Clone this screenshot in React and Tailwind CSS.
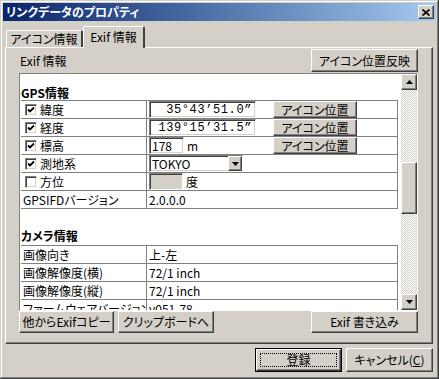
import React from "react";

// classic 3D edges
const raised =
  "bg-[#d4d0c8] border border-t-white border-l-white border-r-[#404040] border-b-[#404040] shadow-[inset_-1px_-1px_#808080]";
const sunken =
  "border border-t-[#808080] border-l-[#808080] border-r-white border-b-white shadow-[inset_1px_1px_#404040,inset_-1px_-1px_#d4d0c8]";

function Check({ checked }) {
  return (
    <span className={`w-[12px] h-[12px] bg-white flex items-center justify-center shrink-0 ${sunken}`}>
      {checked && (
        <svg width="8" height="8" viewBox="0 0 8 8">
          <path d="M1 3.5 L3 5.5 L7 1.5" fill="none" stroke="#000" strokeWidth="1.8" />
        </svg>
      )}
    </span>
  );
}

function Tri({ down }) {
  return (
    <svg width="7" height="4" viewBox="0 0 7 4">
      <polygon points={down ? "0,0 7,0 3.5,4" : "0,4 7,4 3.5,0"} fill="#000" />
    </svg>
  );
}

function PosButton() {
  return (
    <button className={`w-[84px] h-[17px] flex items-center justify-center shrink-0 ${raised}`}>
      アイコン位置
    </button>
  );
}

function Row({ label, check, children }) {
  return (
    <div className="flex h-[18px] border-b border-[#808080]">
      <div className="w-[126px] shrink-0 border-r border-[#808080] flex items-center whitespace-nowrap overflow-hidden">
        {check === undefined ? (
          <span className="pl-[2px]">{label}</span>
        ) : (
          <span className="flex items-center pl-[4px] gap-[3px]">
            <Check checked={check} />
            {label}
          </span>
        )}
      </div>
      <div className="flex-1 flex items-stretch pl-[2px]">{children}</div>
    </div>
  );
}

function CoordRow({ label, value }) {
  return (
    <Row label={label} check={true}>
      <div className="w-[124px] flex items-stretch">
        <div
          className={`w-[107px] bg-white flex items-center justify-end pr-[3px] font-['Liberation_Mono',monospace] tracking-[0.6px] ${sunken}`}
        >
          {value}
        </div>
      </div>
      <PosButton />
    </Row>
  );
}

function CamRow({ label, value }) {
  return (
    <div className="flex h-[18px] border-b border-[#808080] whitespace-nowrap">
      <div className="w-[126px] shrink-0 border-r border-[#808080] flex items-center pl-[2px] overflow-hidden">{label}</div>
      <div className="flex-1 flex items-center pl-[2px]">{value}</div>
    </div>
  );
}

export default function App() {
  return (
    <div className="w-[439px] h-[379px] bg-[#d4d0c8] p-[3px] flex flex-col text-black text-[12px] leading-[14px] font-['Noto_Sans_CJK_JP',sans-serif] [font-feature-settings:'palt'] shadow-[inset_-1px_-1px_#404040,inset_1px_1px_#d4d0c8,inset_-2px_-2px_#808080,inset_2px_2px_#ffffff]">
      {/* title bar */}
      <div className="h-[18px] shrink-0 flex items-center justify-between pl-[3px] pr-[2px] bg-linear-to-r from-[#0a246a] to-[#a6caf0]">
        <span className="text-white font-bold">リンクデータのプロパティ</span>
        <button className={`w-[16px] h-[14px] flex items-center justify-center ${raised}`}>
          <svg width="8" height="7" viewBox="0 0 8 7">
            <path d="M0.5 0.5 L7.5 6.5 M7.5 0.5 L0.5 6.5" stroke="#000" strokeWidth="1.6" />
          </svg>
        </button>
      </div>

      <div className="flex-1 flex flex-col pl-[2px] pr-[3px]">
        {/* tabs */}
        <div className="mt-[5px] h-[21px] flex items-end pl-[1px]">
          <div className="w-[77px] h-[17px] flex items-center justify-center border-l border-t border-white border-r-2 border-r-[#404040] rounded-t-[2px]">
            アイコン情報
          </div>
          <div className="relative z-10 -mb-[1px] w-[62px] h-[22px] flex items-start pt-[3px] justify-center bg-[#d4d0c8] border-l border-t border-white border-r-2 border-r-[#404040] rounded-t-[2px]">
            Exif 情報
          </div>
        </div>

        {/* tab panel */}
        <div className="h-[297px] shrink-0 flex flex-col pl-[13px] pr-[14px] pt-[1px] border border-t-white border-l-white border-r-[#404040] border-b-[#404040] shadow-[inset_-1px_-1px_#808080]">
          <div className="flex items-center justify-between h-[23px]">
            <span className="ml-[1px]">Exif 情報</span>
            <button className={`w-[107px] h-[23px] flex items-center justify-center ${raised}`}>
              アイコン位置反映
            </button>
          </div>

          {/* list */}
          <div className={`mt-[1px] h-[238px] flex overflow-hidden ${sunken}`}>
            <div className="flex-1 bg-white overflow-hidden pl-[1px] pt-[1px]">
              <div className="h-[25px] flex items-end font-bold">GPS情報</div>
              <div className="w-[377px] border-t border-r border-[#808080]">
                <CoordRow label="緯度" value="35°43’51.0”" />
                <CoordRow label="経度" value="139°15’31.5”" />
                <Row label="標高" check={true}>
                  <div className="w-[124px] flex items-stretch gap-[3px]">
                    <div className={`w-[35px] bg-white flex items-center pl-[2px] ${sunken}`}>178</div>
                    <span className="flex items-center">m</span>
                  </div>
                  <PosButton />
                </Row>
                <Row label="測地系" check={true}>
                  <div className={`w-[94px] bg-white flex items-stretch ${sunken}`}>
                    <span className="flex-1 flex items-center pl-[2px]">TOKYO</span>
                    <span className={`w-[14px] flex items-center justify-center ${raised}`}>
                      <Tri down />
                    </span>
                  </div>
                </Row>
                <Row label="方位" check={false}>
                  <div className={`w-[34px] bg-[#d4d0c8] ${sunken}`} />
                  <span className="flex items-center ml-[3px]">度</span>
                </Row>
                <Row label="GPSIFDバージョン">
                  <span className="flex items-center">2.0.0.0</span>
                </Row>
              </div>

              <div className="h-[36px] flex items-end pb-[2px] font-bold">カメラ情報</div>
              <div className="w-[377px] border-t border-r border-[#808080]">
                <CamRow label="画像向き" value="上-左" />
                <CamRow label="画像解像度(横)" value="72/1 inch" />
                <CamRow label="画像解像度(縦)" value="72/1 inch" />
                <CamRow label="ファームウェアバージョン" value="v051-78" />
              </div>
            </div>

            {/* scrollbar */}
            <div className="w-[16px] shrink-0 flex flex-col">
              <div className={`h-[16px] flex items-center justify-center ${raised}`}>
                <Tri />
              </div>
              <div className="flex-1 bg-[image:repeating-conic-gradient(#d4d0c8_0_25%,#ffffff_0_50%)] bg-[length:2px_2px]">
                <div className={`mt-[72px] h-[52px] ${raised}`} />
              </div>
              <div className={`h-[16px] flex items-center justify-center ${raised}`}>
                <Tri down />
              </div>
            </div>
          </div>

          <div className="flex items-center h-[22px] gap-[4px]">
            <button className={`w-[95px] h-[22px] flex items-center justify-center ${raised}`}>他からExifコピー</button>
            <button className={`w-[96px] h-[22px] flex items-center justify-center ${raised}`}>クリップボードへ</button>
            <button className={`ml-auto w-[107px] h-[22px] flex items-center justify-center ${raised}`}>Exif 書き込み</button>
          </div>
        </div>

        {/* dialog buttons */}
        <div className="mt-[4px] flex justify-end gap-[4px]">
          <div className="w-[87px] h-[24px] border border-black">
            <button className={`w-full h-full flex items-center justify-center p-[3px] ${raised}`}>
              <span className="w-full h-full flex items-center justify-center border border-dotted border-black">登録</span>
            </button>
          </div>
          <button className={`w-[87px] h-[24px] flex items-center justify-center ${raised}`}>
            キャンセル(<span className="underline">C</span>)
          </button>
        </div>
      </div>
    </div>
  );
}
